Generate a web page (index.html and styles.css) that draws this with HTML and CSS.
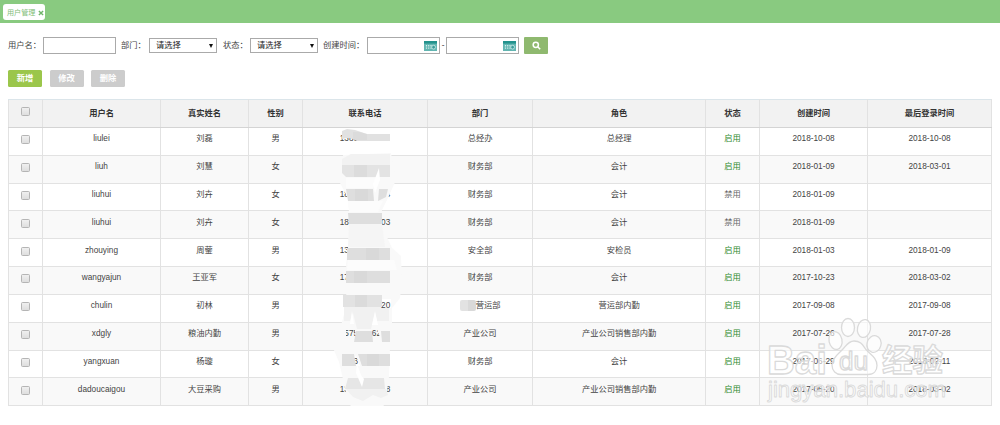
FILE: index.html
```
<!DOCTYPE html>
<html lang="zh-CN">
<head>
  <meta charset="UTF-8">
  <title>用户管理</title>
  <link rel="stylesheet" href="styles.css">
</head>
<body>
  <header class="tab-bar">
    <div class="tab">用户管理
      <svg class="tab-close" viewBox="0 0 10 10"><path d="M1.5 1.5l7 7M8.5 1.5l-7 7"/></svg>
    </div>
  </header>

  <form class="filters">
    <label class="label-user">用户名：</label>
    <input type="text" class="field">
    <label class="label-dept">部门：</label>
    <div class="select">请选择<i class="caret"></i></div>
    <label class="label-status">状态：</label>
    <div class="select">请选择<i class="caret"></i></div>
    <label class="label-date">创建时间：</label>
    <div class="field date">
      <svg viewBox="0 0 13 10"><path class="cal-body" d="M0 0h13v10H0z"/><path class="cal-top" d="M0 0h13v2.6H0z"/><path class="cal-dots" d="M2.5 4v4M4.7 4v4M7 4v4"/><circle class="cal-clock" cx="9.6" cy="6.2" r="1.9"/></svg>
    </div>
    <span class="dash">-</span>
    <div class="field date">
      <svg viewBox="0 0 13 10"><path class="cal-body" d="M0 0h13v10H0z"/><path class="cal-top" d="M0 0h13v2.6H0z"/><path class="cal-dots" d="M2.5 4v4M4.7 4v4M7 4v4"/><circle class="cal-clock" cx="9.6" cy="6.2" r="1.9"/></svg>
    </div>
    <button type="button" class="search">
      <svg viewBox="0 0 10 10"><circle cx="4.2" cy="4.2" r="2.9"/><path d="M6.3 6.3l2.8 2.8"/></svg>
    </button>
  </form>

  <div class="actions">
    <button class="btn btn-add">新增</button>
    <button class="btn">修改</button>
    <button class="btn">删除</button>
  </div>

  <main class="list">
    <table>
      <colgroup>
        <col class="c-check"><col class="c-user"><col class="c-name"><col class="c-sex"><col class="c-phone">
        <col class="c-dept"><col class="c-role"><col class="c-status"><col class="c-created"><col class="c-login">
      </colgroup>
      <thead>
        <tr><th><input type="checkbox"></th><th>用户名</th><th>真实姓名</th><th>性别</th><th>联系电话</th><th>部门</th><th>角色</th><th>状态</th><th>创建时间</th><th>最后登录时间</th></tr>
      </thead>
      <tbody>
        <tr><td><input type="checkbox"></td><td>liulei</td><td>刘磊</td><td>男</td><td class="phone">1380&#8199;&#8199;&#8199;&#8199;&#8199;&#8199;&#8199;</td><td>总经办</td><td>总经理</td><td class="on">启用</td><td>2018-10-08</td><td>2018-10-08</td></tr>
        <tr><td><input type="checkbox"></td><td>liuh</td><td>刘慧</td><td>女</td><td></td><td>财务部</td><td>会计</td><td class="on">启用</td><td>2018-01-09</td><td>2018-03-01</td></tr>
        <tr><td><input type="checkbox"></td><td>liuhui</td><td>刘卉</td><td>女</td><td class="phone">18&#8199;&#8199;&#8199;&#8199;&#8199;5&#8199;&#8199;4</td><td>财务部</td><td>会计</td><td class="off">禁用</td><td>2018-01-09</td><td></td></tr>
        <tr><td><input type="checkbox"></td><td>liuhui</td><td>刘卉</td><td>女</td><td class="phone">18&#8199;&#8199;&#8199;&#8199;&#8199;&#8199;&#8199;03</td><td>财务部</td><td>会计</td><td class="off">禁用</td><td>2018-01-09</td><td></td></tr>
        <tr><td><input type="checkbox"></td><td>zhouying</td><td>周蓥</td><td>男</td><td class="phone">13&#8199;&#8199;&#8199;&#8199;&#8199;&#8199;&#8199;&#8199;&#8199;</td><td>安全部</td><td>安检员</td><td class="on">启用</td><td>2018-01-03</td><td>2018-01-09</td></tr>
        <tr><td><input type="checkbox"></td><td>wangyajun</td><td>王亚军</td><td>女</td><td class="phone">17&#8199;&#8199;&#8199;&#8199;&#8199;&#8199;&#8199;&#8199;&#8199;</td><td>财务部</td><td>会计</td><td class="on">启用</td><td>2017-10-23</td><td>2018-03-02</td></tr>
        <tr><td><input type="checkbox"></td><td>chulin</td><td>初林</td><td>男</td><td class="phone">&#8199;&#8199;&#8199;&#8199;&#8199;&#8199;&#8199;&#8199;&#8199;20</td><td><i class="mosaic"></i>营运部</td><td>营运部内勤</td><td class="on">启用</td><td>2017-09-08</td><td>2017-09-08</td></tr>
        <tr><td><input type="checkbox"></td><td>xdgly</td><td>粮油内勤</td><td>男</td><td class="phone">&#8199;575&#8199;&#8199;&#8199;62&#8199;&#8199;</td><td>产业公司</td><td>产业公司销售部内勤</td><td class="on">启用</td><td>2017-07-26</td><td>2017-07-28</td></tr>
        <tr><td><input type="checkbox"></td><td>yangxuan</td><td>杨璇</td><td>女</td><td class="phone">&#8199;&#8199;&#8199;3&#8199;&#8199;&#8199;&#8199;&#8199;&#8199;&#8199;</td><td>财务部</td><td>会计</td><td class="on">启用</td><td>2017-06-29</td><td>2018-02-11</td></tr>
        <tr><td><input type="checkbox"></td><td>dadoucaigou</td><td>大豆采购</td><td>男</td><td class="phone">13&#8199;&#8199;&#8199;&#8199;&#8199;5&#8199;&#8199;8</td><td>产业公司</td><td>产业公司销售部内勤</td><td class="on">启用</td><td>2017-06-20</td><td>2018-03-02</td></tr>
      </tbody>
    </table>

    <!-- smudges hiding the phone numbers -->
    <svg class="smudge" viewBox="330 120 80 290">
      <path fill="#f9f9f9" fill-rule="evenodd" d="M343 155l48-2 5 27-9 20-5 10-1 14 11 24 9 8 1 26-2 16-8 10 0 24-2 15-1 30-3 20-4 15-12 6-18-8-6-18-7-30-6-14 6-14 6-24 2-24-1-22 2-16 2-26-2-24-8-15z
        M381 299h10v9h-10z M346 329h4l3-7 4 18h-11z M372 329l3-7 6 19h-9z M353 356h3l4 10h-5z"/>
      <path fill="#f2f2f2" d="M342 159l9-5h39v11h-48z"/>
      <path fill="#f5f5f5" d="M349 224h33l3 23h-37z"/>
      <path fill="#fcfcfc" d="M346 178h30l-3 10h-27zM348 201h35l-5 11h-29zM348 260h46l3 10h-50z"/>
      <g fill="#dedede">
        <path fill="#e1e1e1" d="M342 131l5-2 8 1 12 4h23v7h-33l-4-2-5-1-6 1z"/>
        <path fill="#e3e3e3" d="M342 165h48v12h-44l-4-4z"/>
        <path d="M346 189h27l1 12h-26zM379 189h9l-2 8-8 4z"/>
        <path d="M348 213h34v11h-33z"/>
        <path d="M347 248h43v12h-43z"/>
        <path d="M346 271h44v12h-44z"/>
        <path fill="#e2e2e2" d="M343 295h39v12h-39z"/>
        <path d="M356 331h16l1 11h-19zM381 331h9v11h-8z"/>
        <path d="M342 354h12l2 12h-14zM358 354h32v12h-28z"/>
        <path fill="#e6e6e6" d="M348 378h36l1 11h-40z"/>
      </g>
      <path fill="#f1f1f1" d="M344 307h37v1h8v13h-12l-2-8-4 16h-14l-4-16-3 8h-6zM346 389h40l2 6-7 3-8-3-10 6-10-4z"/>
      <path fill="#d3d3d3" opacity=".4" d="M353 132h6l8 2v6h-14zM354 165h13v12h-13zM355 189h13v12h-13zM366 248h13v12h-13zM354 271h13v12h-13zM355 295h12v12h-12zM367 354h12v12h-12z"/>
      <path fill="#fff" d="M379 168l1 12-5 13-2-9zM352 311l2 13h-4zM375 311l3 14h-6zM357 364l4 11 3 4-2 8-6-14z"/>
    </svg>
  </main>

  <svg class="watermark" viewBox="760 310 200 100">
    <g class="mark">
      <text class="latin" x="767" y="373.500" font-size="41" textLength="60" lengthAdjust="spacingAndGlyphs">Bai</text>
      <ellipse cx="835.500" cy="340.500" rx="6.500" ry="9" transform="rotate(-12 835.5 340.5)"/>
      <ellipse cx="848" cy="327.500" rx="6.500" ry="9"/>
      <ellipse cx="864" cy="328.500" rx="6.500" ry="9" transform="rotate(12 864 328.500)"/>
      <ellipse cx="874" cy="344" rx="7" ry="8.500" transform="rotate(15 874 344)"/>
      <path d="M854 341c-6 0-8 5-12 9s-10 8-10 15c0 6 4 9.500 9 9.500h27c6 0 9-4 9-9 0-8-7-11-11-16-3-4-5-8.500-12-8.500z"/>
      <text class="du" x="839" y="370" font-size="25" textLength="29" lengthAdjust="spacingAndGlyphs">du</text>
      <text class="cjk" x="882" y="370.500" font-size="31" textLength="61" lengthAdjust="spacingAndGlyphs">经验</text>
      <text class="url" x="768" y="397" font-size="22" textLength="178" lengthAdjust="spacingAndGlyphs">jingyan.baidu.com</text>
    </g>
  </svg>
</body>
</html>
```
FILE: styles.css
```
* {
  box-sizing: border-box;
}
body {
  margin: 0;
  background: #fff;
  color: #444;
  font-family: "Liberation Sans", "Noto Sans CJK SC", sans-serif;
  font-size: 8.25px;
  line-height: 12px;
}
.tab-bar {
  height: 23px;
  padding: 4px 3px 0;
  background: #89ca80;
}
.tab {
  display: flex;
  align-items: center;
  justify-content: space-between;
  width: 42px;
  height: 16px;
  padding: 1px 1px 0 4px;
  border-radius: 3px;
  background: #fff;
  color: #7fbd78;
  font-size: 7.1px;
  white-space: nowrap;
}
.tab-close {
  width: 6px;
  height: 6px;
  fill: none;
  stroke: #6fb56a;
  stroke-width: 2.4;
}

/* search form */
.filters {
  display: flex;
  align-items: center;
  height: 17px;
  margin: 14px 0 0 8px;
}
.filters label {
  white-space: nowrap;
}
.label-user {
  width: 35px;
}
.label-dept {
  width: 33px;
  padding-left: 5px;
}
.label-status {
  width: 33px;
  padding-left: 6px;
}
.label-date {
  width: 49px;
  padding-left: 5px;
}
.field {
  width: 73px;
  height: 17px;
  padding: 0;
  border: 1px solid #aaa;
  background: #fff;
}
.date {
  display: flex;
  align-items: center;
  justify-content: flex-end;
  padding-right: 2px;
}
.date svg {
  width: 13px;
  height: 10px;
}
.cal-body {
  fill: #62b5b1;
}
.cal-top {
  fill: #23928d;
}
.cal-dots {
  fill: none;
  stroke: #d4eeec;
  stroke-width: 1.2;
  stroke-dasharray: 1.4 1;
}
.cal-clock {
  fill: #3a9c98;
  stroke: #d4eeec;
  stroke-width: .8;
}
.dash {
  width: 6px;
  text-align: center;
}
.select {
  display: flex;
  align-items: center;
  justify-content: space-between;
  width: 68px;
  height: 15px;
  padding: 1px 3px 0 6px;
  border: 1px solid #aaa;
  color: #222;
}
.caret {
  border: 2px solid transparent;
  border-top: 4px solid #111;
  border-bottom: 0;
}
.search {
  display: flex;
  align-items: center;
  justify-content: center;
  width: 24px;
  height: 17px;
  margin-left: 5px;
  padding: 0;
  border: 0;
  border-radius: 1px;
  background: #8fb96f;
}
.search svg {
  width: 9px;
  height: 9px;
  fill: none;
  stroke: #fff;
  stroke-width: 1.7;
}

/* toolbar */
.actions {
  display: flex;
  gap: 7.5px;
  margin: 16px 0 0 8px;
}
.btn {
  width: 34px;
  height: 17px;
  padding: 0;
  border: 0;
  border-radius: 1.5px;
  background: #ccc;
  color: #fff;
  font: bold 8.25px/17px "Liberation Sans", "Noto Sans CJK SC", sans-serif;
}
.btn-add {
  background: #9bc64b;
}

/* user table */
.list {
  position: relative;
  width: 983px;
  margin: 12px 0 0 8px;
}
table {
  width: 983px;
  table-layout: fixed;
  border-collapse: collapse;
}
.c-check { width: 34px; }
.c-user { width: 118px; }
.c-name { width: 88px; }
.c-sex { width: 54px; }
.c-phone { width: 125px; }
.c-dept { width: 105px; }
.c-role { width: 173px; }
.c-status { width: 54px; }
.c-created { width: 108px; }
.c-login { width: 124px; }
th, td {
  height: 27.85px;
  padding: 0;
  border: 1px solid #e2e2e2;
  text-align: center;
  vertical-align: middle;
  white-space: nowrap;
}
th {
  padding-top: 1px;
  border-top-color: #dbe5ea;
  border-bottom-color: #d4d4d4;
  background: #f2f2f2;
  color: #333;
}
td {
  padding-bottom: 4px;
}
tbody tr:nth-child(even) {
  background: #f9f9f9;
}
.on {
  color: #2f8a30;
}
.off {
  color: #666;
}
input[type="checkbox"] {
  display: block;
  width: 9px;
  height: 9px;
  margin: 0 auto;
  appearance: none;
  border: 1px solid #b5b5b5;
  border-radius: 1.5px;
  background: linear-gradient(#f0f0f0, #dedede);
}
th input[type="checkbox"] {
  position: relative;
  top: -2px;
}
td input[type="checkbox"] {
  position: relative;
  top: .5px;
}
.mosaic {
  display: inline-block;
  width: 16px;
  height: 11px;
  margin: -3px 0 -1px;
  border-radius: 2px;
  background: linear-gradient(90deg, #e2e2e2 50%, #d9d9d9 50%);
  vertical-align: middle;
}
.smudge {
  position: absolute;
  left: 322px;
  top: 21px;
  width: 80px;
  height: 290px;
}

.watermark {
  position: absolute;
  left: 760px;
  top: 310px;
  width: 200px;
  height: 100px;
}
.mark {
  fill: #fff;
  fill-opacity: .6;
  stroke: #dadada;
  stroke-width: 1.3;
  stroke-linejoin: round;
  font-family: "Liberation Sans", sans-serif;
  font-weight: bold;
}
.mark .du {
  font-weight: normal;
}
.mark .cjk {
  font-family: "Noto Sans CJK SC", sans-serif;
}
.mark .url {
  stroke-width: .9;
  font-weight: normal;
}
```
